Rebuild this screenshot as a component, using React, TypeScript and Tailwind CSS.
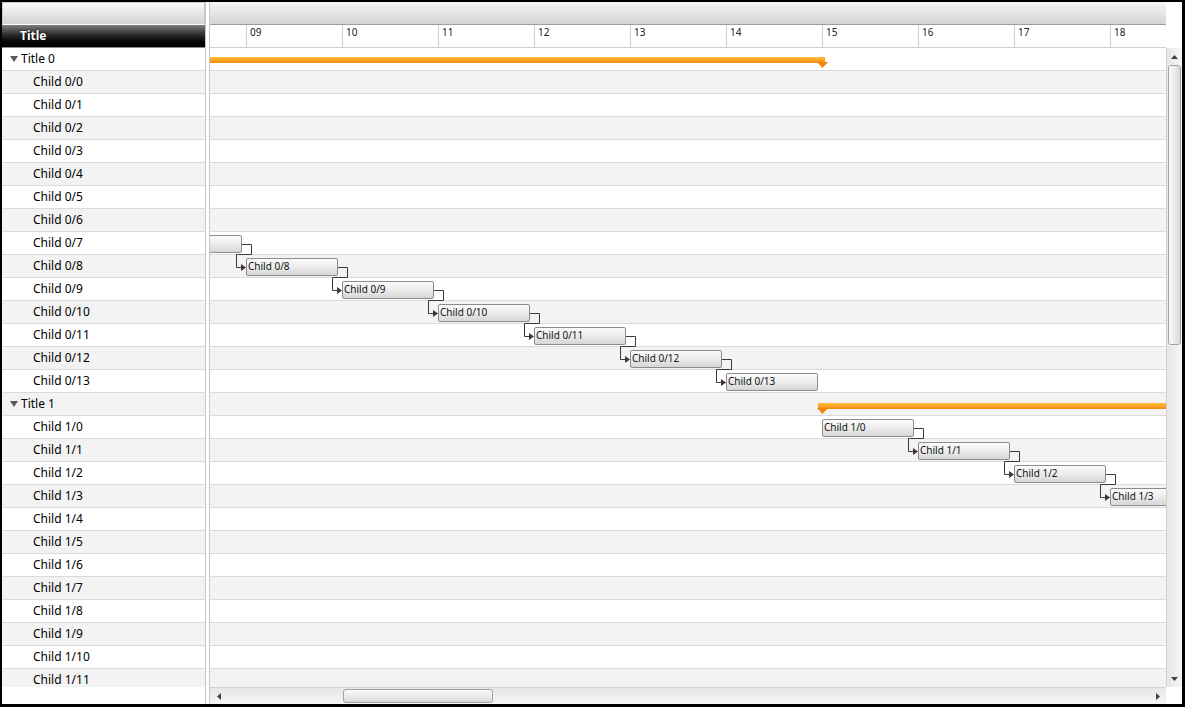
import React from "react";

type Row = { label: string; title?: boolean };

const rows: Row[] = [];
rows.push({ label: "Title 0", title: true });
for (let i = 0; i < 14; i++) rows.push({ label: `Child 0/${i}` });
rows.push({ label: "Title 1", title: true });
for (let i = 0; i < 12; i++) rows.push({ label: `Child 1/${i}` });

const ROW_H = 23;
const hourX = (h: number) => 36 + 96 * (h - 9);

type Bar = { row: number; x: number; label: string; group: number };
const bars: Bar[] = [];
for (let k = 7; k <= 13; k++) bars.push({ row: k + 1, x: hourX(k + 1), label: `Child 0/${k}`, group: 0 });
for (let k = 0; k <= 3; k++) bars.push({ row: 16 + k, x: hourX(15 + k), label: `Child 1/${k}`, group: 1 });

const BAR_W = 92;

function connectors() {
  const out: React.ReactElement[] = [];
  for (let i = 0; i < bars.length - 1; i++) {
    const a = bars[i];
    const b = bars[i + 1];
    if (a.group !== b.group) continue;
    const xe = a.x + BAR_W + 0.5;
    const xs = b.x;
    const ya = a.row * ROW_H + 12.5;
    const yb = b.row * ROW_H + 12.5;
    const ymid = b.row * ROW_H - 0.5;
    out.push(
      <g key={i}>
        <path
          d={`M ${xe - 0.5} ${ya} H ${xe + 9} V ${ymid} H ${xs - 9.5} V ${yb} H ${xs - 4}`}
          fill="none"
          stroke="#3a3a3a"
          strokeWidth={1}
        />
        <polygon points={`${xs - 5},${yb - 3.5} ${xs},${yb} ${xs - 5},${yb + 3.5}`} fill="#3a3a3a" />
      </g>
    );
  }
  return out;
}

function ArrowUp() {
  return (
    <svg width="7" height="4" viewBox="0 0 7 4">
      <polygon points="0,4 3.5,0 7,4" fill="#404040" />
    </svg>
  );
}
function ArrowDown() {
  return (
    <svg width="7" height="4" viewBox="0 0 7 4">
      <polygon points="0,0 3.5,4 7,0" fill="#404040" />
    </svg>
  );
}
function ArrowLeft() {
  return (
    <svg width="4" height="7" viewBox="0 0 4 7">
      <polygon points="4,0 0,3.5 4,7" fill="#404040" />
    </svg>
  );
}
function ArrowRight() {
  return (
    <svg width="4" height="7" viewBox="0 0 4 7">
      <polygon points="0,0 4,3.5 0,7" fill="#404040" />
    </svg>
  );
}

export default function App() {
  const hours = ["09", "10", "11", "12", "13", "14", "15", "16", "17", "18"];
  return (
    <div className="w-[1185px] h-[707px] overflow-hidden bg-white border-black border-t-2 border-l-2 border-r-[3px] border-b-[3px] flex font-['Noto_Sans',sans-serif] text-black">
      {/* Left tree panel */}
      <div className="w-[204px] flex flex-col border-r border-[#c8c8c8]">
        <div className="h-[23px] bg-linear-to-b from-[#fafafa] to-[#d3d3d3] border border-[#c9c9c9] border-b-white" />
        <div className="h-[23px] bg-linear-to-b from-[#808080] via-[#232323] to-black border-b border-[#8a8a8a] flex items-center pl-[18px]">
          <span className="text-[12px] font-bold text-white [text-shadow:0_0_2px_#000]">Title</span>
        </div>
        <div className="h-[639px] overflow-hidden">
          {rows.map((r, i) => (
            <div
              key={i}
              className={`h-[23px] border-b border-[#dadada] flex items-center text-[12px] leading-none ${
                i % 2 === 0 ? "bg-white" : "bg-[#f3f3f3]"
              } ${r.title ? "pl-[8px]" : "pl-[31px]"}`}
            >
              {r.title && (
                <svg width="8" height="6" viewBox="0 0 8 6" className="mr-[3px]">
                  <polygon points="0,0 8,0 4,6" fill="#595959" />
                </svg>
              )}
              <span>{r.label}</span>
            </div>
          ))}
        </div>
        <div className="h-[17px] bg-white" />
      </div>

      {/* splitter */}
      <div className="w-[3px] bg-white" />

      {/* Gantt */}
      <div className="flex-1 flex border-l border-[#c8c8c8]">
        <div className="w-[956px] flex flex-col">
          <div className="h-[23px] bg-linear-to-b from-[#f7f7f7] to-[#d4d4d4] border-b border-[#9c9c9c]" />
          <div className="h-[23px] flex border-b border-[#cfcfcf] overflow-hidden bg-white">
            <div className="w-[36px] shrink-0" />
            {hours.map((h) => (
              <div key={h} className="w-[96px] shrink-0 border-l border-[#cfcfcf] pl-[3px] pt-[1px] text-[10px] leading-[13px] text-[#222]">
                {h}
              </div>
            ))}
          </div>
          <div className="relative h-[639px] overflow-hidden">
            {rows.map((_, i) => (
              <div key={i} className={`h-[23px] border-b border-[#dadada] ${i % 2 === 0 ? "bg-white" : "bg-[#f3f3f3]"}`} />
            ))}

            {/* summary bars */}
            <div className="absolute h-[6px] bg-linear-to-b from-[#ffbd3a] to-[#f28a06]" style={{ left: -200, width: 815, top: 9 }} />
            <svg className="absolute" style={{ left: 607, top: 14 }} width="11" height="6" viewBox="0 0 11 6">
              <polygon points="0,0 11,0 5.5,6" fill="#f08708" />
            </svg>
            <div className="absolute h-[6px] bg-linear-to-b from-[#ffbd3a] to-[#f28a06]" style={{ left: 608, width: 400, top: 15 * ROW_H + 10 }} />
            <svg className="absolute" style={{ left: 607, top: 15 * ROW_H + 15 }} width="11" height="6" viewBox="0 0 11 6">
              <polygon points="0,0 11,0 5.5,6" fill="#f08708" />
            </svg>

            {/* connectors */}
            <svg className="absolute left-0 top-0" width="956" height="639">
              {connectors()}
            </svg>

            {/* task bars */}
            {bars.map((b) => (
              <div
                key={b.label}
                className="absolute h-[18px] border border-[#8c8c8c] rounded-[2px] bg-linear-to-b from-[#fbfbfb] via-[#ececec] to-[#d6d6d6] text-[10px] leading-[15px] pl-[1px] overflow-hidden whitespace-nowrap text-[#111]"
                style={{ left: b.x, top: b.row * ROW_H + 3, width: BAR_W }}
              >
                {b.label}
              </div>
            ))}
          </div>
          {/* horizontal scrollbar */}
          <div className="h-[17px] flex bg-linear-to-b from-[#e6e6e6] to-[#f6f6f6] border-t border-[#d2d2d2]">
            <div className="w-[17px] flex items-center justify-center">
              <ArrowLeft />
            </div>
            <div className="flex-1 flex items-center">
              <div className="ml-[116px] w-[150px] h-[14px] rounded-[3px] border border-[#a3a3a3] bg-linear-to-b from-[#fbfbfb] via-[#ececec] to-[#d9d9d9]" />
            </div>
            <div className="w-[17px] flex items-center justify-center">
              <ArrowRight />
            </div>
          </div>
        </div>

        {/* right column with vertical scrollbar */}
        <div className="w-[16px] flex flex-col">
          <div className="h-[46px] bg-white" />
          <div className="h-[639px] flex flex-col bg-linear-to-r from-[#e6e6e6] to-[#f6f6f6] border-l border-[#d2d2d2]">
            <div className="h-[17px] flex items-center justify-center">
              <ArrowUp />
            </div>
            <div className="flex-1">
              <div className="ml-[1px] w-[13px] h-[280px] rounded-[3px] border border-[#a3a3a3] bg-linear-to-r from-[#fbfbfb] via-[#ececec] to-[#d9d9d9]" />
            </div>
            <div className="h-[17px] flex items-center justify-center">
              <ArrowDown />
            </div>
          </div>
          <div className="h-[17px] bg-white" />
        </div>
      </div>
    </div>
  );
}
